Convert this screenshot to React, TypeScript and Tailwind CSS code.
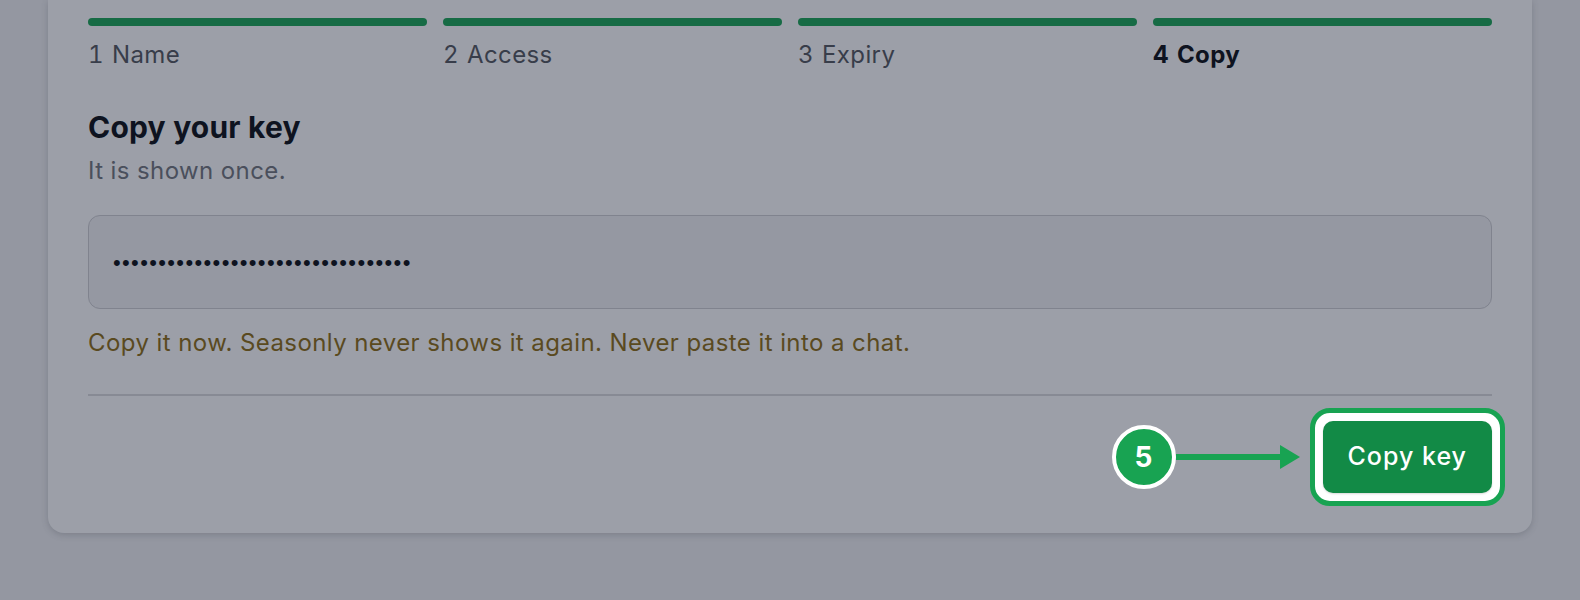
import React from "react";

const steps = [
  { n: 1, label: "Name" },
  { n: 2, label: "Access" },
  { n: 3, label: "Expiry" },
  { n: 4, label: "Copy", active: true },
];

const App = () => {
  const masked = "•".repeat(33);
  return (
    <div className="min-h-screen w-full bg-[#9497a1] px-12 font-['Inter',sans-serif]">
      <div className="rounded-b-[16px] bg-[#9c9fa8] px-10 pt-[18px] pb-10 shadow-[0_2px_6px_rgba(60,64,75,0.25)]">
        <div className="grid grid-cols-4 gap-4">
          {steps.map((s) => (
            <div key={s.n}>
              <div className="h-2 rounded-full bg-[#176b45]" />
              <p
                className={
                  s.active
                    ? "mt-[13px] text-[24px] leading-[32px] font-bold tracking-[0.4px] tabular-nums text-[#0e1320]"
                    : "mt-[13px] text-[24px] leading-[32px] tracking-[0.4px] tabular-nums text-[#383d4a]"
                }
              >
                {s.n}
                <span className="ml-[8px]">{s.label}</span>
              </p>
            </div>
          ))}
        </div>

        <h2 className="mt-[38px] text-[30px] leading-[36px] font-bold tracking-[0.2px] text-[#0e1320]">
          Copy your key
        </h2>
        <p className="mt-[10px] text-[24px] leading-[32px] tracking-[0.4px] text-[#4a4f5c]">
          It is shown once.
        </p>

        <div className="mt-[28px] flex h-[94px] items-center rounded-[12px] border-[1.5px] border-[#80838e] bg-[#9598a2] pl-[24px]">
          <span className="font-['Liberation_Sans',sans-serif] text-[22px] tracking-[1.35px] text-[#0e1320]">
            {masked}
          </span>
        </div>

        <p className="mt-[18px] text-[24px] leading-[32px] tracking-[0.42px] text-[#5a4a1f]">
          Copy it now. Seasonly never shows it again. Never paste it into a chat.
        </p>

        <div className="mt-[35px] h-[2px] bg-[#878a94]" />

        <div className="mt-[25px] flex items-center justify-end">
          <div className="flex h-16 w-16 items-center justify-center rounded-full border-4 border-white bg-[#18a352] text-[28px] font-bold text-white">
            5
          </div>
          <div className="h-[6px] w-[104px] bg-[#18a352]" />
          <svg width="20" height="24" viewBox="0 0 20 24" className="block">
            <polygon points="0,0 20,12 0,24" fill="#18a352" />
          </svg>
          <div className="relative ml-[23px]">
            <span className="pointer-events-none absolute -inset-[13px] rounded-[20px] border-[5px] border-[#18a352] bg-white" />
            <button className="relative flex h-[72px] items-center rounded-[10px] bg-[#128a46] px-[25px] text-[25px] font-medium tracking-[1px] text-white shadow-[0_1px_2px_rgba(0,0,0,0.15)]">
              Copy key
            </button>
          </div>
        </div>
      </div>
    </div>
  );
};

export default App;
